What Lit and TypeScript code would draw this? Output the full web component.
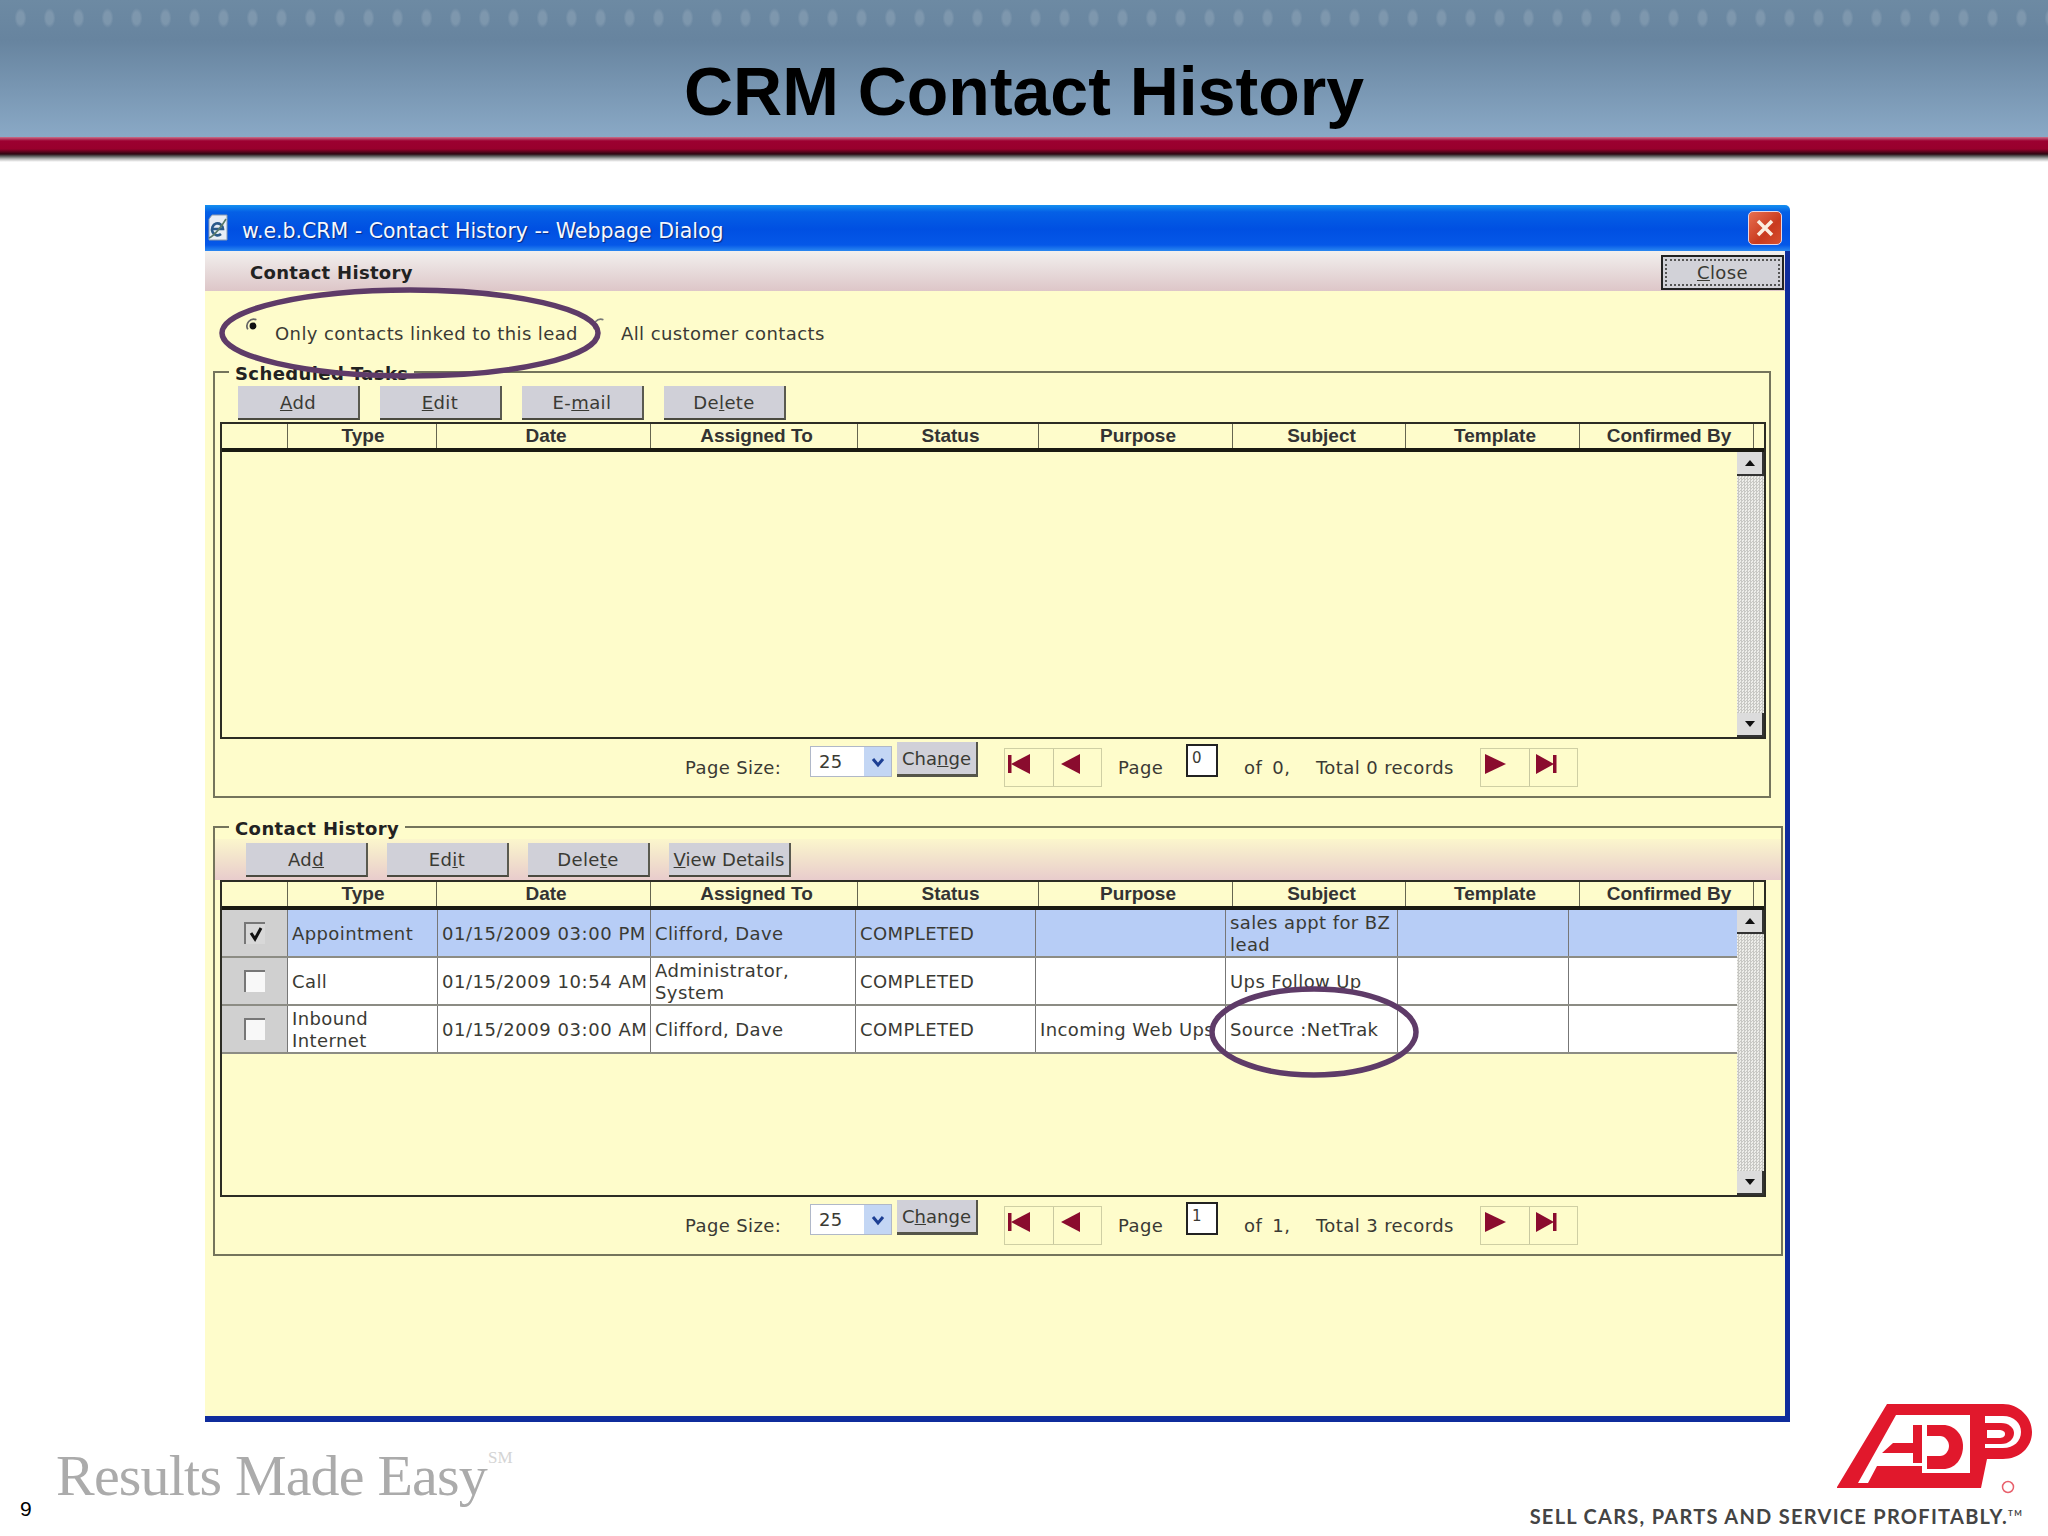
import { LitElement, html, css, svg } from "lit";
import { customElement } from "lit/decorators.js";

const HEAD = ["", "Type", "Date", "Assigned To", "Status", "Purpose", "Subject", "Template", "Confirmed By", ""];
const ROWS = [
  { checked: true, sel: true, cells: ["Appointment", "01/15/2009 03:00 PM", "Clifford, Dave", "COMPLETED", "", "sales appt for BZ lead", "", ""] },
  { checked: false, sel: false, cells: ["Call", "01/15/2009 10:54 AM", "Administrator, System", "COMPLETED", "", "Ups Follow Up", "", ""] },
  { checked: false, sel: false, cells: ["Inbound Internet", "01/15/2009 03:00 AM", "Clifford, Dave", "COMPLETED", "Incoming Web Ups", "Source :NetTrak", "", ""] },
];

function ul(label: string, i: number) {
  return html`${label.slice(0, i)}<u>${label[i]}</u>${label.slice(i + 1)}`;
}

@customElement("app-root")
export class AppRoot extends LitElement {
  static styles = css`
    :host { display: block; position: relative; width: 2048px; height: 1536px; overflow: hidden; background: #fff; font-family: "DejaVu Sans", sans-serif; color: #3a3a34; font-size: 18px; letter-spacing: .4px; }
    * { box-sizing: border-box; }
    .hdr { height: 162px; background:
        linear-gradient(180deg, rgba(0,0,0,0) 137px, #c9708a 137px, #9c0030 141px, #98002c 149px, #2c0510 154px, #555 156px, #bbb 159px, #fff 162px),
        radial-gradient(ellipse 6px 10px at 50% 50%, rgba(255,255,255,.13) 60%, rgba(255,255,255,0) 100%) 6px 5px / 29px 26px repeat-x,
        linear-gradient(180deg, #6d8aa3 0, #67849f 40px, #8aa9c6 137px);
      display: flex; justify-content: center; align-items: flex-start; }
    h1 { margin: 52px 0 0; font: bold 68px/78px "Liberation Sans", sans-serif; letter-spacing: 0; color: #000; }

    .dialog { margin: 43px 0 0 205px; width: 1585px; height: 1217px; display: flex; flex-direction: column; }
    .titlebar { height: 46px; flex: none; border-radius: 0 5px 0 0; background: linear-gradient(180deg, #1490f0 0, #0560e6 7px, #0050e2 24px, #0558e8 40px, #2a88f0 46px); display: flex; align-items: center; padding: 0 8px 0 2px; color: #f4f8ff; }
    .titlebar .ttl { margin: 6px 0 0 13px; font: 20.5px/26px "DejaVu Sans", sans-serif; letter-spacing: 0; text-shadow: 1px 1px 1px #0a2a80; flex: 1; }
    .xbtn { width: 34px; height: 34px; border-radius: 5px; border: 1.5px solid #e6d6e4; background: linear-gradient(135deg, #e87050, #c93a1e 60%, #d85030); display: flex; align-items: center; justify-content: center; }
    .body { flex: 1; display: flex; flex-direction: column; background: #fefccb; border-right: 5px solid #0f2c9c; border-bottom: 6px solid #0f2c9c; }
    .tool { height: 40px; flex: none; background: linear-gradient(180deg, #f2f0ee, #ddc6c8); display: flex; align-items: center; justify-content: space-between; padding: 0 1px 0 45px; }
    .tool b { margin-top: 3px; font: bold 18px/24px "DejaVu Sans", sans-serif; letter-spacing: .3px; color: #222; }
    .close { margin-top: 3px; width: 123px; height: 35px; border: 2px solid #222; background: #d2d2d8; display: flex; align-items: center; justify-content: center; outline: 2px dotted #555; outline-offset: -6px; }
    .radios { height: 69px; flex: none; display: flex; align-items: flex-start; padding: 31px 0 0 40px; line-height: 24px; }
    .radios svg { margin-top: -4px; flex: none; }
    .radios .l1 { margin-left: 14px; width: 317px; }
    .radios .l2 { margin-left: 13px; }

    fieldset { margin: 0 0 0 8px; padding: 0; border: 2px solid #74745c; min-width: 0; }
    legend { margin-left: 14px; padding: 0 6px; font: bold 18px/28px "DejaVu Sans", sans-serif; letter-spacing: .4px; color: #222; height: 24px; }
    .fs1 { width: 1558px; height: 438px; }
    .fs2 { width: 1570px; height: 441px; margin-top: 17px; }
    .btns { display: flex; gap: 20px; height: 38px; padding: 2px 0 0 23px; }
    .fs2 .strip { height: 41px; padding: 4px 0 0 31px; gap: 19px; display: flex; background: linear-gradient(180deg, #fbf6cc, #e8cccc); }
    .btn { width: 122px; height: 34px; background: #d0d0d8; border-right: 2px solid #5a5a50; border-bottom: 2px solid #4a4a40; display: flex; align-items: center; justify-content: center; white-space: nowrap; }

    .grid { margin-left: 5px; width: 1546px; height: 317px; border: 2px solid #2c2c24; display: flex; flex-direction: column; }
    .ghead { height: 28px; flex: none; border-bottom: 4px solid #1a1a12; display: grid; grid-template-columns: 66px 149px 214px 207px 181px 194px 173px 174px 174px 1fr; }
    .ghead div { border-right: 1px solid #666650; padding-left: 5px; font: bold 19px/24px "Liberation Sans", sans-serif; letter-spacing: 0; text-align: center; color: #333; }
    .ghead div:nth-child(2) { padding-left: 2px; }
    .ghead div:last-child { border-right: none; }
    .gbody { flex: 1; display: flex; min-height: 0; }
    .rows { flex: 1; min-width: 0; }
    .row { height: 48px; display: grid; grid-template-columns: 66px 150px 213px 205px 180px 190px 172px 171px 1fr; border-bottom: 2px solid #8c8c84; background: #fff; }
    .row.sel { background: #b7cdf6; }
    .row > div { border-right: 1px solid #777; display: flex; align-items: center; padding: 2px 3px 0 4px; line-height: 22px; overflow: hidden; }
    .row > div:last-child { border-right: none; }
    .row .nw { white-space: nowrap; }
    .row > .chk { background: #d0d0d0; padding: 0; justify-content: center; }
    .box { width: 21px; height: 22px; background: #f8f8f8; border-top: 2px solid #777; border-left: 2px solid #777; display: flex; align-items: center; justify-content: center; }
    .box.on { background: #d8d8d8; }
    .row .dt { letter-spacing: .55px; }
    .scroll { width: 27px; flex: none; display: flex; flex-direction: column; background: repeating-conic-gradient(#c8c8c4 0 25%, #eeeeea 0 50%) 0 0 / 3px 3px; }
    .sbtn { height: 24px; flex: none; background: #dcdcdc; border-right: 2px solid #333; border-bottom: 2px solid #333; display: flex; align-items: center; justify-content: center; }
    .strack { flex: 1; }

    .pager { height: 57px; display: flex; align-items: flex-start; padding-left: 470px; }
    .ptext { margin-top: 17px; line-height: 24px; white-space: pre; }
    .sel25 { margin-top: 7px; width: 82px; height: 31px; border: 1px solid #b0b8c8; background: #fff; display: flex; align-items: center; justify-content: space-between; padding-left: 8px; }
    .sel25 i { width: 27px; height: 29px; background: #c3d6f4; display: flex; align-items: center; justify-content: center; }
    .chg { margin: 3px 0 0 5px; width: 81px; height: 35px; background: #d0d0d8; border-right: 2px solid #55554a; border-bottom: 3px solid #55554a; display: flex; justify-content: center; padding-top: 6px; line-height: 22px; letter-spacing: 0; }
    .nav { margin-top: 9px; height: 39px; display: flex; border: 1px solid #cfcfa4; }
    .nav div { width: 48px; padding: 4px 0 0 2px; }
    .nav.back div { padding-left: 0; }
    .nav div + div { border-left: 1px solid #c8c8a0; }
    .pinput { margin-top: 5px; width: 32px; height: 33px; background: #fff; border: 2px solid #222; padding: 0 0 0 4px; font-size: 15px; line-height: 24px; }

    .foot { margin-top: -19px; height: 133px; display: flex; align-items: flex-start; justify-content: space-between; }
    .left { display: flex; align-items: flex-start; padding: 38px 0 0 20px; }
    .num { margin-top: 56px; font: 21px/24px "Liberation Sans", sans-serif; letter-spacing: 0; color: #000; width: 36px; }
    .rme { font: 58px/70px "Liberation Serif", serif; color: #ababab; letter-spacing: -.8px; }
    .sm { font: 17px/18px "Liberation Serif", serif; letter-spacing: 0; color: #d4d4d4; margin: 8px 0 0 1px; }
    .right { display: flex; flex-direction: column; align-items: flex-end; padding-right: 16px; }
    .tag { margin: 10px 9px 0 0; font: bold 20px/22px "Lato", sans-serif; color: #444; letter-spacing: 1.28px; white-space: nowrap; }
    .tag sup { font-size: 8px; line-height: 0; }
    .ovals { position: absolute; left: 0; top: 0; pointer-events: none; }
  `;

  private navIcon(kind: string) {
    const c = "#8a0c2e";
    const map: Record<string, unknown> = {
      first: svg`<rect x="3" y="2" width="3.5" height="18" fill="${c}"/><path d="M25 1V21L6 11Z" fill="${c}"/>`,
      prev: svg`<path d="M26 1V21L7 11Z" fill="${c}"/>`,
      next: svg`<path d="M2 1V21L23 11Z" fill="${c}"/>`,
      last: svg`<path d="M4 1V21L22 11Z" fill="${c}"/><rect x="21" y="2" width="3.5" height="18" fill="${c}"/>`,
    };
    return html`<svg width="28" height="22" viewBox="0 0 28 22">${map[kind]}</svg>`;
  }

  private pager(page: string, pages: string, total: string, chg: number) {
    return html`<div class="pager">
      <span class="ptext" style="width:125px">Page Size:</span>
      <div class="sel25">25<i><svg width="14" height="12" viewBox="0 0 14 12"><path d="M2 3L7 9L12 3" fill="none" stroke="#1c3f94" stroke-width="3"/></svg></i></div>
      <div class="chg"><span>${ul("Change", chg)}</span></div>
      <div class="nav back" style="margin-left:26px"><div>${this.navIcon("first")}</div><div>${this.navIcon("prev")}</div></div>
      <span class="ptext" style="margin-left:16px;width:68px">Page</span>
      <div class="pinput">${page}</div>
      <span class="ptext" style="margin-left:26px;width:72px;word-spacing:4px">of ${pages},</span>
      <span class="ptext" style="width:164px">Total ${total} records</span>
      <div class="nav"><div>${this.navIcon("next")}</div><div>${this.navIcon("last")}</div></div>
    </div>`;
  }

  private scrollbar() {
    return html`<div class="scroll">
      <div class="sbtn"><svg width="12" height="8" viewBox="0 0 12 8"><path d="M1 7H11L6 1Z" fill="#111"/></svg></div>
      <div class="strack"></div>
      <div class="sbtn"><svg width="12" height="8" viewBox="0 0 12 8"><path d="M1 1H11L6 7Z" fill="#111"/></svg></div>
    </div>`;
  }

  private grid(rows: typeof ROWS) {
    return html`<div class="grid">
      <div class="ghead">${HEAD.map((h) => html`<div>${h}</div>`)}</div>
      <div class="gbody">
        <div class="rows">
          ${rows.map((r) => html`<div class="row ${r.sel ? "sel" : ""}">
            <div class="chk"><span class="box ${r.checked ? "on" : ""}">${r.checked ? html`<svg width="16" height="16" viewBox="0 0 16 16"><path d="M3 7L7 13L13 2" fill="none" stroke="#111" stroke-width="3"/></svg>` : ""}</span></div>
            ${r.cells.map((c, i) => html`<div class="${i === 1 ? "dt nw" : i === 4 ? "nw" : ""}">${c}</div>`)}
          </div>`)}
        </div>
        ${this.scrollbar()}
      </div>
    </div>`;
  }

  private logo() {
    const red = "#e1182c";
    return html`<svg width="195" height="92" viewBox="0 0 195 92">
      <path fill="${red}" d="M0 84L50 1H166C182 1 195 14 195 29C195 45 182 56 166 56H150L144 85H0Z"/>
      <path fill="#fff" d="M21 80L59 12H133V70H85V63H40L31 80Z"/>
      <path fill="${red}" d="M45 50L56 40H76V22H85V60H76V50Z"/>
      <path fill="${red}" d="M90 22H106C118 22 126 32 126 43C126 56 118 66 106 66H90Z"/>
      <path fill="#fff" d="M88 33H103C108 33 112 38 112 43C112 48 108 53 103 53H88Z"/>
      <path fill="#fff" d="M148 13H166C177 13 184 20 184 29C184 38 177 45 166 45H148Z"/>
      <path fill="${red}" d="M145 20H164C172 20 177 25 177 30C177 36 172 41 164 41H145Z"/>
      <path fill="#fff" d="M150 27H162C165 27 168 28 168 31C168 34 165 35 162 35H150Z"/>
      <circle cx="171" cy="84" r="5.5" fill="none" stroke="#e8606c" stroke-width="1.5"/>
    </svg>`;
  }

  render() {
    return html`
      <div class="hdr"><h1>CRM Contact History</h1></div>
      <div class="dialog">
        <div class="titlebar">
          <svg width="22" height="28" viewBox="0 0 22 28"><path d="M5 1H20V26H2V5Z" fill="#e8eef6" stroke="#8a9ab0"/><path d="M5 15H16A5.5 6 0 1 0 14 20" fill="none" stroke="#2a5a8a" stroke-width="2.6"/><path d="M2 24C7 22 15 12 19 5" fill="none" stroke="#5a7a6a" stroke-width="1.6"/></svg>
          <span class="ttl">w.e.b.CRM - Contact History -- Webpage Dialog</span>
          <div class="xbtn"><svg width="20" height="20" viewBox="0 0 20 20"><path d="M3 3L17 17M17 3L3 17" stroke="#fbeee0" stroke-width="3.5"/></svg></div>
        </div>
        <div class="body">
          <div class="tool"><b>Contact History</b><div class="close"><span>${ul("Close", 0)}</span></div></div>
          <div class="radios">
            <svg width="16" height="16" viewBox="0 0 14 14"><path d="M10 1.5A6 6 0 0 0 2.5 10" fill="none" stroke="#666" stroke-width="1.5"/><circle cx="7" cy="7" r="3" fill="#111"/></svg>
            <span class="l1">Only contacts linked to this lead</span>
            <svg width="16" height="16" viewBox="0 0 14 14"><path d="M10 1.5A6 6 0 0 0 2.5 10" fill="none" stroke="#777" stroke-width="1.5"/></svg>
            <span class="l2">All customer contacts</span>
          </div>
          <fieldset class="fs1">
            <legend>Scheduled Tasks</legend>
            <div class="btns">
              <div class="btn"><span>${ul("Add", 0)}</span></div>
              <div class="btn"><span>${ul("Edit", 0)}</span></div>
              <div class="btn"><span>${ul("E-mail", 2)}</span></div>
              <div class="btn"><span>${ul("Delete", 2)}</span></div>
            </div>
            ${this.grid([])}
            ${this.pager("0", "0", "0", 3)}
          </fieldset>
          <fieldset class="fs2">
            <legend>Contact History</legend>
            <div class="strip">
              <div class="btn"><span>${ul("Add", 2)}</span></div>
              <div class="btn"><span>${ul("Edit", 2)}</span></div>
              <div class="btn"><span>${ul("Delete", 4)}</span></div>
              <div class="btn"><span style="letter-spacing:0">${ul("View Details", 0)}</span></div>
            </div>
            ${this.grid(ROWS)}
            ${this.pager("1", "1", "3", 1)}
          </fieldset>
        </div>
      </div>
      <div class="foot">
        <div class="left">
          <span class="num">9</span>
          <span class="rme">Results Made Easy</span>
          <span class="sm">SM</span>
        </div>
        <div class="right">
          ${this.logo()}
          <div class="tag">SELL CARS, PARTS AND SERVICE PROFITABLY.<sup>TM</sup></div>
        </div>
      </div>
      <svg class="ovals" width="2048" height="1536" viewBox="0 0 2048 1536">
        <ellipse cx="410" cy="333" rx="188" ry="43" fill="none" stroke="#5e3b68" stroke-width="5.5"/>
        <ellipse cx="1314" cy="1032" rx="102" ry="43" fill="none" stroke="#5e3b68" stroke-width="5.5"/>
      </svg>
    `;
  }
}
